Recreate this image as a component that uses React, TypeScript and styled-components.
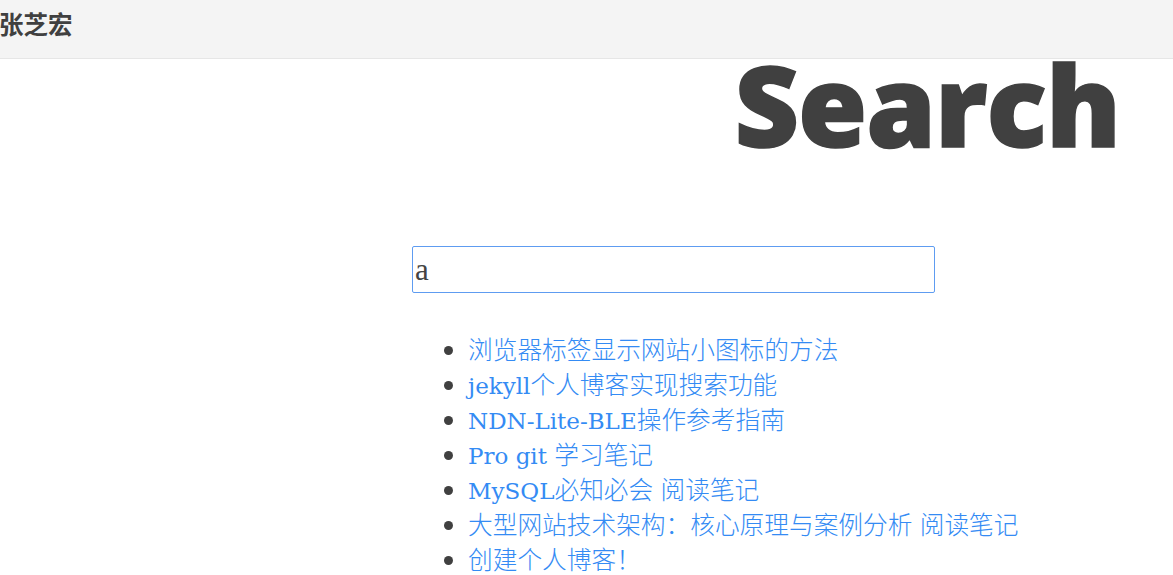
import React from "react";
import styled, { createGlobalStyle } from "styled-components";

const Global = createGlobalStyle`
  html, body { margin: 0; padding: 0; background: #fff; }
  body { font-family: "DejaVu Serif", "Noto Sans CJK SC", serif; color: #404040; }
`;

const Header = styled.header`
  height: 58px;
  background: #f4f4f4;
  border-bottom: 1px solid #e6e6e6;
  display: flex;
  align-items: flex-start;
`;

const Brand = styled.div`
  font-family: "Noto Sans CJK SC", sans-serif;
  font-weight: 700;
  font-size: 24.5px;
  line-height: 24px;
  padding-top: 12px;
  margin-left: -1px;
  color: #404040;
`;

const Title = styled.h1`
  margin: 0;
  font-family: "Open Sans", sans-serif;
  font-weight: 800;
  font-size: 112px;
  line-height: 89px;
  text-align: right;
  padding-right: 53px;
  color: #404040;
  letter-spacing: -1px;
  -webkit-text-stroke: 1.5px #404040;
`;

const Column = styled.main`
  margin-left: 412px;
  padding-top: 98px;
`;

const SearchInput = styled.input`
  box-sizing: border-box;
  width: 523px;
  height: 47px;
  border: 1px solid #5e9cf1;
  border-radius: 2px;
  outline: none;
  padding: 0 2px;
  font-family: "Liberation Serif", serif;
  font-size: 31px;
  color: #444;
`;

const Results = styled.ul`
  margin: 38px 0 0;
  padding-left: 56px;
  list-style: disc;
`;

const Item = styled.li`
  font-family: "Noto Sans CJK SC", sans-serif;
  font-size: 24.7px;
  line-height: 35px;
  color: #404040;
  &::marker { font-size: 22px; }
`;

const Link = styled.a`
  color: #348bf4;
  text-decoration: none;
  font-weight: 300;
`;

const Latin = styled.span`
  font-family: "DejaVu Serif", serif;
  font-size: 23px;
  line-height: 1;
`;

const posts = [
  "浏览器标签显示网站小图标的方法",
  "jekyll个人博客实现搜索功能",
  "NDN-Lite-BLE操作参考指南",
  "Pro git 学习笔记",
  "MySQL必知必会 阅读笔记",
  "大型网站技术架构：核心原理与案例分析 阅读笔记",
  "创建个人博客！",
];

function PostTitle({ text }: { text: string }) {
  const parts = text.split(/([A-Za-z0-9\- ]+)/).filter(Boolean);
  return (
    <>
      {parts.map((p, i) =>
        /^[A-Za-z0-9\- ]+$/.test(p) ? <Latin key={i}>{p}</Latin> : <React.Fragment key={i}>{p}</React.Fragment>
      )}
    </>
  );
}

export default function App() {
  return (
    <>
      <Global />
      <Header>
        <Brand>张芝宏</Brand>
      </Header>
      <Title>Search</Title>
      <Column>
        <SearchInput defaultValue="a" autoFocus />
        <Results>
          {posts.map((p) => (
            <Item key={p}>
              <Link href="#">
                <PostTitle text={p} />
              </Link>
            </Item>
          ))}
        </Results>
      </Column>
    </>
  );
}
